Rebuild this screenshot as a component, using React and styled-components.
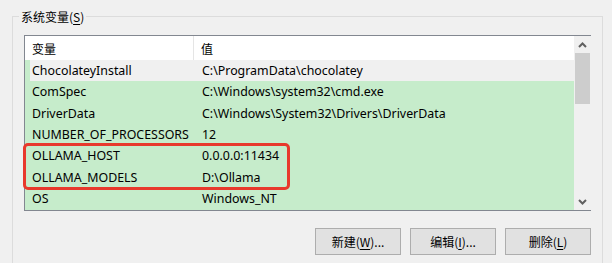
import React from "react";
import styled, { createGlobalStyle } from "styled-components";

const GlobalStyle = createGlobalStyle`
  html, body {
    margin: 0;
    padding: 0;
    background: #f0f0f0;
  }
  body {
    font-family: "Segoe UI", "Noto Sans", "Noto Sans CJK SC", sans-serif;
    font-size: 12px;
    color: #000;
  }
`;

const Page = styled.div`
  width: 612px;
  height: 263px;
  overflow: hidden;
  padding: 16px 0 0 12px;
  box-sizing: border-box;
`;

const GroupBox = styled.div`
  position: relative;
  width: 591px;
  height: 280px;
  box-sizing: border-box;
  border: 1px solid #dcdcdc;
  padding: 18px 11px 0 11px;
`;

const GroupTitle = styled.div`
  position: absolute;
  top: -9px;
  left: 6px;
  padding: 0 2px;
  background: #f0f0f0;
  line-height: 17px;
  font-family: "Noto Sans CJK SC", sans-serif;
`;

const Key = styled.span`
  text-decoration: underline;
  text-underline-offset: 2px;
`;

const ListBox = styled.div`
  width: 567px;
  height: 176px;
  box-sizing: border-box;
  border: 1px solid #828790;
  background: #c6eccb;
  display: flex;
`;

const Table = styled.div`
  flex: 1;
  display: flex;
  flex-direction: column;
  position: relative;
`;

const HeaderRow = styled.div`
  display: flex;
  height: 24px;
  background: #fff;
  align-items: center;
`;

const HeaderCell = styled.div`
  width: ${(p) => p.$w}px;
  height: 100%;
  box-sizing: border-box;
  display: flex;
  align-items: center;
  padding-left: 7px;
  border-right: ${(p) => (p.$divider ? "1px solid #e5e5e5" : "none")};
  font-family: "Noto Sans CJK SC", sans-serif;
`;

const Row = styled.div`
  display: flex;
  height: 21.3px;
  align-items: center;
  padding-left: 5px;
`;

const RowInner = styled.div`
  flex: 1;
  display: flex;
  height: 100%;
  align-items: center;
  background: ${(p) => (p.$selected ? "#f0f0f0" : "transparent")};
`;

const Cell = styled.div`
  width: ${(p) => p.$w}px;
  padding-left: 2px;
  white-space: nowrap;
  font-size: 12.4px;
`;

const Highlight = styled.div`
  position: absolute;
  left: -2px;
  top: 107px;
  width: 267px;
  height: 47px;
  box-sizing: border-box;
  border: 3px solid #e8392c;
  border-radius: 5px;
`;

const ScrollBar = styled.div`
  width: 17px;
  background: #f0f0f0;
  display: flex;
  flex-direction: column;
  align-items: center;
`;

const ArrowBox = styled.div`
  height: 17px;
  width: 17px;
  display: flex;
  align-items: center;
  justify-content: center;
`;

const Thumb = styled.div`
  width: 15px;
  height: 51px;
  background: #cdcdcd;
`;

const Track = styled.div`
  flex: 1;
`;

const ButtonRow = styled.div`
  display: flex;
  justify-content: flex-end;
  gap: 9px;
  margin-top: 17px;
  width: 567px;
`;

const Button = styled.button`
  width: 86px;
  height: 27px;
  box-sizing: border-box;
  border: 1px solid #adadad;
  background: #e1e1e1;
  font-family: "Noto Sans CJK SC", sans-serif;
  font-size: 12px;
  color: #000;
  padding: 0;
`;

const Chevron = ({ up }) => (
  <svg width="9" height="6" viewBox="0 0 9 6">
    <path
      d={up ? "M1 5 L4.5 1.5 L8 5" : "M1 1 L4.5 4.5 L8 1"}
      fill="none"
      stroke="#606060"
      strokeWidth="2"
    />
  </svg>
);

const vars = [
  ["ChocolateyInstall", "C:\\ProgramData\\chocolatey"],
  ["ComSpec", "C:\\Windows\\system32\\cmd.exe"],
  ["DriverData", "C:\\Windows\\System32\\Drivers\\DriverData"],
  ["NUMBER_OF_PROCESSORS", "12"],
  ["OLLAMA_HOST", "0.0.0.0:11434"],
  ["OLLAMA_MODELS", "D:\\Ollama"],
  ["OS", "Windows_NT"],
];

export default function App() {
  return (
    <Page>
      <GlobalStyle />
      <GroupBox>
        <GroupTitle>
          系统变量(<Key>S</Key>)
        </GroupTitle>
        <ListBox>
          <Table>
            <HeaderRow>
              <HeaderCell $w={169} $divider>
                变量
              </HeaderCell>
              <HeaderCell $w={380}>值</HeaderCell>
            </HeaderRow>
            {vars.map(([name, value], i) => (
              <Row key={name}>
                <RowInner $selected={i === 0}>
                  <Cell $w={168}>{name}</Cell>
                  <Cell $w={370}>{value}</Cell>
                </RowInner>
              </Row>
            ))}
            <Highlight />
          </Table>
          <ScrollBar>
            <ArrowBox>
              <Chevron up />
            </ArrowBox>
            <Thumb />
            <Track />
            <ArrowBox>
              <Chevron />
            </ArrowBox>
          </ScrollBar>
        </ListBox>
        <ButtonRow>
          <Button>
            新建(<Key>W</Key>)...
          </Button>
          <Button>
            编辑(<Key>I</Key>)...
          </Button>
          <Button>
            删除(<Key>L</Key>)
          </Button>
        </ButtonRow>
      </GroupBox>
    </Page>
  );
}
